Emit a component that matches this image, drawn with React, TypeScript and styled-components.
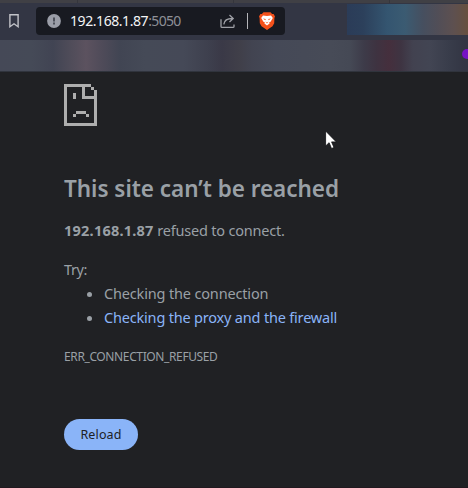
import React from "react";
import styled, { createGlobalStyle } from "styled-components";

const GlobalStyle = createGlobalStyle`
  * { box-sizing: border-box; }
  body { margin: 0; background: #202124; overflow: hidden; font-family: "Noto Sans", sans-serif; }
`;

const Window = styled.div`
  position: relative;
  display: flex;
  flex-direction: column;
  width: 468px;
  height: 488px;
  background: #202124;
  border-bottom: 1px solid #21191f;
`;

const TabStrip = styled.div`
  display: flex;
  flex: none;
  height: 3px;
  background: #404045;
`;

const TabSlot = styled.div<{ $width: number }>`
  width: ${(p) => p.$width}px;
  border-right: 1px solid #35363c;
`;

const Toolbar = styled.div`
  display: flex;
  flex: none;
  height: 37px;
  padding-top: 4px;
  background: #333644;
`;

const BookmarkSlot = styled.div`
  display: flex;
  width: 36px;
  padding: 7px 0 0 9px;
`;

const AddressBar = styled.div`
  display: flex;
  align-items: center;
  width: 249px;
  height: 28px;
  padding-left: 11px;
  border-radius: 4px;
  background: #181a21;
`;

const Address = styled.div`
  display: flex;
  width: 150px;
  margin-left: 9px;
  font-size: 14px;
  line-height: 20px;
  white-space: nowrap;
`;

const Fit = styled.span<{ $spacing?: number }>`
  letter-spacing: ${(p) => p.$spacing ?? 0}px;
`;

const Host = styled(Fit)`
  color: #f4f5f7;
`;

const Port = styled(Fit)`
  color: #8e9097;
`;

const Divider = styled.div`
  width: 1px;
  height: 16px;
  margin: 0 11px 0 12px;
  background: #b5b6ba;
`;

const Extensions = styled.div`
  width: 121px;
  height: 31px;
  margin: -3px 0 0 62px;
  background: linear-gradient(90deg, #2b3c58 0, #2c405b 16px, #345570 40px, #3b5b72 58px, #464f5f 76px, #514e57 91px, #5d5050 106px, #67503f 121px);
`;

const BookmarkBar = styled.div`
  display: flex;
  flex: none;
  justify-content: flex-end;
  height: 32px;
  padding-top: 9px;
  overflow: hidden;
  border-bottom: 1px solid #30343d;
  background: linear-gradient(90deg, #454957 0, #454a57 32px, #414453 53px, #4f4c59 70px, #5c525f 86px, #4f4b59 102px, #414553 120px, #454a57 145px, #454957 184px, #3e404e 208px, #3a3947 222px, #403f49 239px, #424451 252px, #454957 275px, #474b57 332px, #454955 350px, #3d3b49 364px, #3e3341 376px, #452f3d 389px, #3e3442 401px, #424250 413px, #424553 430px, #393d4b 448px, #333644 464px);
`;

const PurpleDot = styled.div`
  flex: none;
  width: 10px;
  height: 10px;
  margin-right: -4px;
  border-radius: 50%;
  background: #7713c5;
`;

const ErrorPage = styled.main`
  display: flex;
  flex-direction: column;
  align-items: flex-start;
  padding: 12px 0 0 64px;
  color: #9aa0a6;
  font-size: 14.5px;
  line-height: 24px;
  white-space: nowrap;
`;

const Title = styled.h1`
  margin: 48px 0 0;
  font-size: 22.5px;
  font-weight: 600;
  line-height: 29px;
`;

const Summary = styled.p`
  margin: 15px 0 0;
`;

const Suggestions = styled.div`
  margin-top: 15px;
`;

const List = styled.ul`
  margin: 0;
  padding-left: 40px;
`;

const Link = styled.a`
  color: #8ab4f8;
`;

const ErrorCode = styled.div`
  margin-top: 19px;
  font-size: 12px;
  line-height: 18px;
`;

const ReloadButton = styled.button`
  width: 74px;
  height: 31px;
  margin: 53px 0 0;
  padding: 0;
  border: 0;
  border-radius: 16px;
  background: #8ab4f8;
  color: #202124;
  font: 12.5px/31px "Noto Sans", sans-serif;
  letter-spacing: 0.15px;
`;

const Cursor = styled.svg`
  position: absolute;
  left: 325px;
  top: 130px;
`;

const BookmarkIcon = () => (
  <svg width="10" height="14" viewBox="0 0 10 14" fill="none" stroke="#c2c3c8" strokeWidth="1.4">
    <path d="M.9.7h8.2v12L5 9.8.9 12.7z" />
  </svg>
);

const InfoIcon = () => (
  <svg width="14" height="14" viewBox="0 0 14 14">
    <circle cx="7" cy="7" r="6.9" fill="#9b9ea8" />
    <path d="M6 3.5h2v4H6zM6 8.6h2v2H6z" fill="#4d505a" />
  </svg>
);

const ShareIcon = () => (
  <svg width="15" height="15" viewBox="0 0 15 15" fill="none" stroke="#9fa1a7" strokeWidth="1.3">
    <path d="M1 5.2v7.2q0 1 1 1h11q1 0 1-1v-2M3.8 10.4C4.2 6.5 7 4.5 12.6 4.5M9.5 1l3.7 3.5L9.5 8" />
  </svg>
);

const BraveIcon = () => (
  <svg width="16" height="18" viewBox="0 0 16 18">
    <path d="M4.5.3h7l1.6 1.8 1.5-.2L16 4.4l-.6 1.7-.2 5.2-1.7 3L8 18l-5.5-3.7-1.7-3-.2-5.2L0 4.4l1.4-2.5 1.5.2z" fill="#f4511b" />
    <path d="m4 3.5 4 .6 4-.6 1.8 2.6-2.2 3.7-1.4.5.4 1.1L8 13.6l-2.6-2.2.4-1.1-1.4-.5-2.2-3.7z" fill="#fff" />
    <path d="m4 6.4 2.8.7-.5 1.2zM12 6.4l-2.8.7.5 1.2zM6.3 9.4l1.7 1 1.7-1L8 11.5z" fill="#f4511b" />
  </svg>
);

const SadPageIcon = () => (
  <svg width="33" height="42" viewBox="0 0 33 42" fill="#aeaeae" shapeRendering="crispEdges">
    <path d="M0 0h27v3h-6v9h9V6h3v36H0zM3 3v36h27V15H18V3z" fillRule="evenodd" />
    <path d="M27 3h3v3h-3zM9 9h3v6H9zM12 27h10v3H12zM9 30h3v3H9zM22 30h3v3h-3z" />
  </svg>
);

export default function App() {
  return (
    <>
      <GlobalStyle />
      <Window>
        <TabStrip>
          <TabSlot $width={78} />
          <TabSlot $width={156} />
          <TabSlot $width={156} />
        </TabStrip>
        <Toolbar>
          <BookmarkSlot>
            <BookmarkIcon />
          </BookmarkSlot>
          <AddressBar>
            <InfoIcon />
            <Address>
              <Host $spacing={-0.43}>192.168.1.87</Host>
              <Port $spacing={-0.65}>:5050</Port>
            </Address>
            <ShareIcon />
            <Divider />
            <BraveIcon />
          </AddressBar>
          <Extensions />
        </Toolbar>
        <BookmarkBar>
          <PurpleDot />
        </BookmarkBar>
        <ErrorPage>
          <SadPageIcon />
          <Title><Fit $spacing={-0.03}>This site can’t be reached</Fit></Title>
          <Summary>
            <Fit as="strong" $spacing={0.23}>192.168.1.87</Fit>
            <Fit $spacing={-0.2}> refused to connect.</Fit>
          </Summary>
          <Suggestions>
            <Fit $spacing={-0.4}>Try:</Fit>
            <List>
              <li><Fit $spacing={-0.16}>Checking the connection</Fit></li>
              <li><Link><Fit $spacing={-0.19}>Checking the proxy and the firewall</Fit></Link></li>
            </List>
          </Suggestions>
          <ErrorCode><Fit $spacing={-0.38}>ERR_CONNECTION_REFUSED</Fit></ErrorCode>
          <ReloadButton>Reload</ReloadButton>
        </ErrorPage>
        <Cursor width="12" height="20" viewBox="0 0 12 20">
          <path d="M.6 1v15l3.5-3.3 2.4 5.8 2.5-1-2.4-5.6h4.7z" fill="#fff" stroke="#101114" strokeWidth=".8" />
        </Cursor>
      </Window>
    </>
  );
}
